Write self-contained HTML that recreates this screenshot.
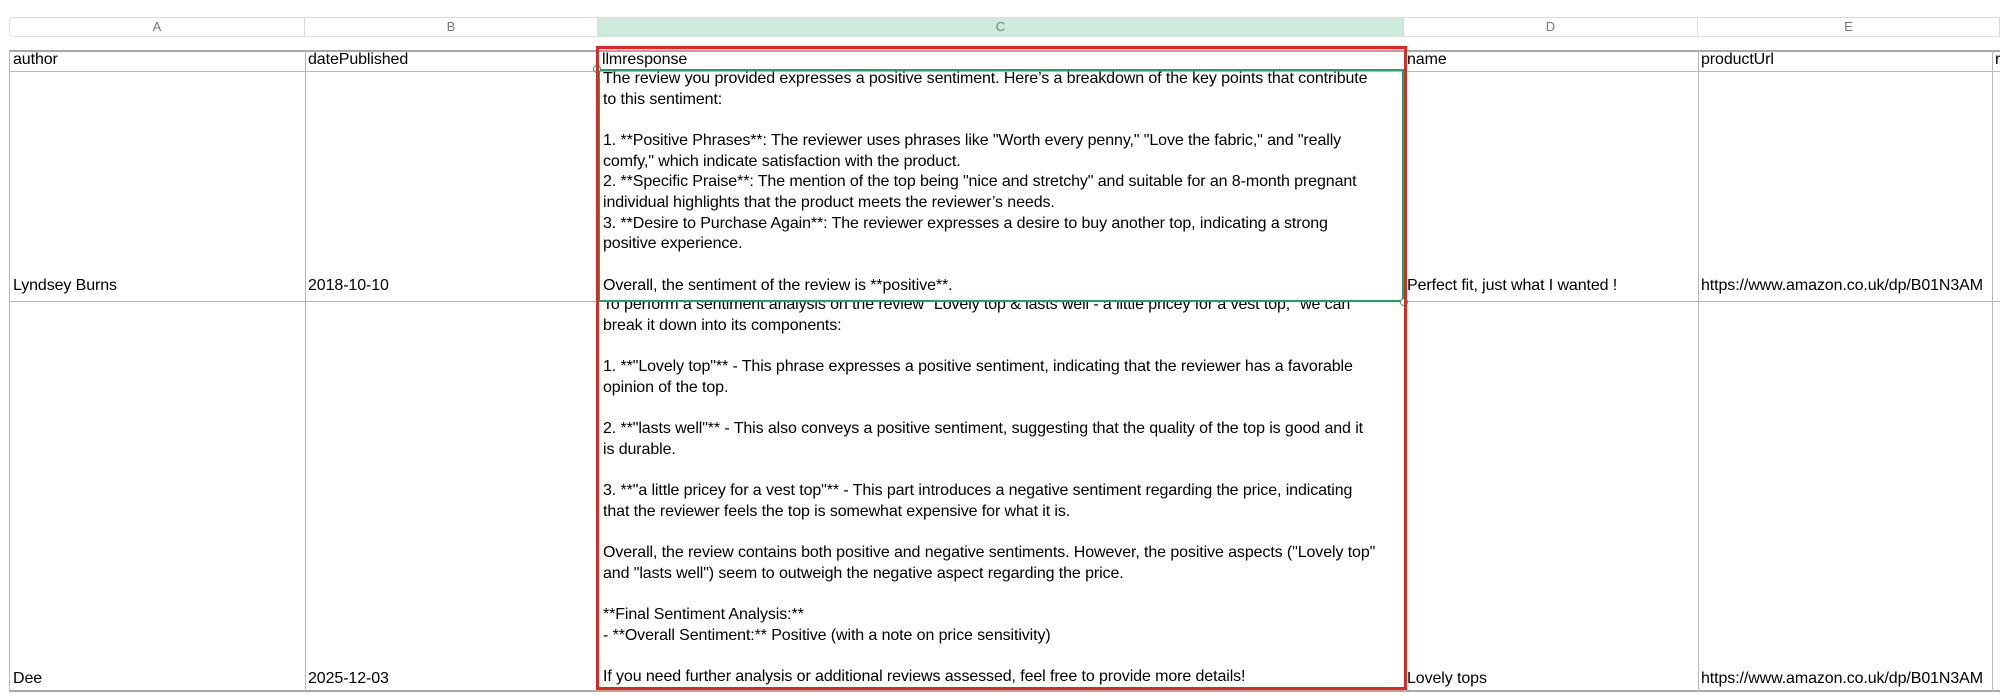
<!DOCTYPE html>
<html><head><meta charset="utf-8"><style>
*{margin:0;padding:0;box-sizing:border-box}
body{width:2000px;height:695px;background:#fff;position:relative;overflow:hidden;font-family:"Liberation Sans",Arial,sans-serif;color:#000}
.a{position:absolute}
.hb{top:17px;height:20px;border:1px solid #dcdcdc;font-size:13px;color:#777;text-align:center;line-height:18px;border-left:none}
.vl{position:absolute;width:1px;background:#b8b8b8}
.hl{position:absolute;height:1px;background:#b8b8b8;left:9px;width:1991px}
.t{position:absolute;font-size:16px;white-space:pre;line-height:20.66px;letter-spacing:-0.1px}
</style></head><body>
<div class="a hb" style="left:9px;width:296px;border-left:1px solid #dcdcdc;border-radius:5px 0 0 5px">A</div>
<div class="a hb" style="left:305px;width:293px">B</div>
<div class="a hb" style="left:598px;width:806px;background:#cdebda">C</div>
<div class="a hb" style="left:1404px;width:294px">D</div>
<div class="a hb" style="left:1698px;width:302px">E</div>

<div class="hl" style="top:50px;background:#a8a8a8;height:2px"></div>
<div class="hl" style="top:71px"></div>
<div class="hl" style="top:301px"></div>
<div class="hl" style="top:690px;height:2px;background:#a8a8a8"></div>
<div class="vl" style="left:9px;top:50px;height:642px"></div>
<div class="vl" style="left:305px;top:50px;height:642px"></div>
<div class="vl" style="left:598px;top:50px;height:642px"></div>
<div class="vl" style="left:1404px;top:50px;height:642px"></div>
<div class="vl" style="left:1698px;top:50px;height:642px"></div>
<div class="vl" style="left:1992px;top:50px;height:642px"></div>

<div class="t" style="left:13px;top:50px">author</div>
<div class="t" style="left:308px;top:50px">datePublished</div>
<div class="t" style="left:602px;top:50px">llmresponse</div>
<div class="t" style="left:1407px;top:50px">name</div>
<div class="t" style="left:1701px;top:50px">productUrl</div>
<div class="t" style="left:1995px;top:50px">r</div>

<div class="t" style="left:13px;top:276px">Lyndsey Burns</div>
<div class="t" style="left:308px;top:276px">2018-10-10</div>
<div class="t" style="left:1407px;top:276px">Perfect fit, just what I wanted !</div>
<div class="t" style="left:1701px;top:276px;width:291px;overflow:hidden">https://www.amazon.co.uk/dp/B01N3AM</div>

<div class="t" style="left:13px;top:669px">Dee</div>
<div class="t" style="left:308px;top:669px">2025-12-03</div>
<div class="t" style="left:1407px;top:669px">Lovely tops</div>
<div class="t" style="left:1701px;top:669px;width:291px;overflow:hidden">https://www.amazon.co.uk/dp/B01N3AM</div>

<div class="t" style="left:603px;top:69px">The review you provided expresses a positive sentiment. Here’s a breakdown of the key points that contribute
to this sentiment:

1. **Positive Phrases**: The reviewer uses phrases like "Worth every penny," "Love the fabric," and "really
comfy," which indicate satisfaction with the product.
2. **Specific Praise**: The mention of the top being "nice and stretchy" and suitable for an 8-month pregnant
individual highlights that the product meets the reviewer’s needs.
3. **Desire to Purchase Again**: The reviewer expresses a desire to buy another top, indicating a strong
positive experience.

Overall, the sentiment of the review is **positive**.</div>

<div class="a" style="left:598px;top:302px;width:806px;height:388px;overflow:hidden">
<div class="t" style="left:5px;top:-7px">To perform a sentiment analysis on the review "Lovely top &amp; lasts well - a little pricey for a vest top," we can
break it down into its components:

1. **"Lovely top"** - This phrase expresses a positive sentiment, indicating that the reviewer has a favorable
opinion of the top.

2. **"lasts well"** - This also conveys a positive sentiment, suggesting that the quality of the top is good and it
is durable.

3. **"a little pricey for a vest top"** - This part introduces a negative sentiment regarding the price, indicating
that the reviewer feels the top is somewhat expensive for what it is.

Overall, the review contains both positive and negative sentiments. However, the positive aspects ("Lovely top"
and "lasts well") seem to outweigh the negative aspect regarding the price.

**Final Sentiment Analysis:**
- **Overall Sentiment:** Positive (with a note on price sensitivity)

If you need further analysis or additional reviews assessed, feel free to provide more details!</div></div>

<div class="a" style="left:598px;top:69px;width:806px;height:233px;border:2px solid #21a366"></div>
<div class="a" style="left:593px;top:65px;width:8px;height:8px;border:1.5px solid #21a366;border-radius:50%;background:#fff"></div>
<div class="a" style="left:1400px;top:298px;width:8px;height:8px;border:1.5px solid #21a366;border-radius:50%;background:#fff"></div>
<div class="a" style="left:596px;top:46px;width:811px;height:644px;border:3px solid #e8241c"></div>
</body></html>
